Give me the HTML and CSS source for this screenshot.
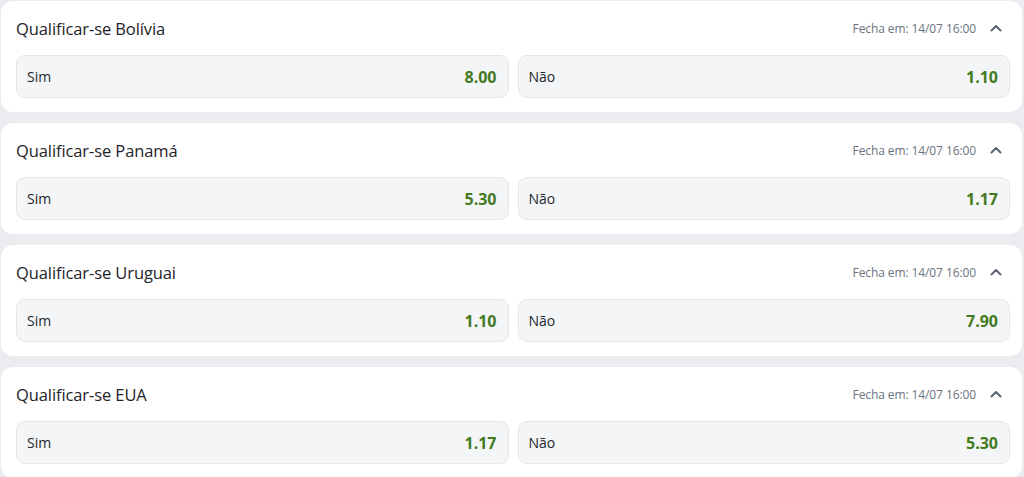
FILE: index.html
```html
<!DOCTYPE html>
<html lang="pt">
<head>
<meta charset="utf-8">
<link rel="stylesheet" href="styles.css">
</head>
<body>
<div class="list">
  <section class="market">
    <header class="market-head">
      <h3 class="market-title">Qualificar-se Bolívia</h3>
      <div class="market-meta"><span class="closes">Fecha em: 14/07 16:00</span>
        <svg class="chev" viewBox="0 0 12 8" width="12" height="8"><path d="M1.5 6.5 6 2l4.5 4.5" fill="none" stroke="currentColor" stroke-width="2" stroke-linecap="round" stroke-linejoin="round"/></svg></div>
    </header>
    <div class="odds">
      <button class="odd"><span class="label">Sim</span><span class="price">8.00</span></button>
      <button class="odd"><span class="label">Não</span><span class="price">1.10</span></button>
    </div>
  </section>
  <section class="market">
    <header class="market-head">
      <h3 class="market-title">Qualificar-se Panamá</h3>
      <div class="market-meta"><span class="closes">Fecha em: 14/07 16:00</span>
        <svg class="chev" viewBox="0 0 12 8" width="12" height="8"><path d="M1.5 6.5 6 2l4.5 4.5" fill="none" stroke="currentColor" stroke-width="2" stroke-linecap="round" stroke-linejoin="round"/></svg></div>
    </header>
    <div class="odds">
      <button class="odd"><span class="label">Sim</span><span class="price">5.30</span></button>
      <button class="odd"><span class="label">Não</span><span class="price">1.17</span></button>
    </div>
  </section>
  <section class="market">
    <header class="market-head">
      <h3 class="market-title">Qualificar-se Uruguai</h3>
      <div class="market-meta"><span class="closes">Fecha em: 14/07 16:00</span>
        <svg class="chev" viewBox="0 0 12 8" width="12" height="8"><path d="M1.5 6.5 6 2l4.5 4.5" fill="none" stroke="currentColor" stroke-width="2" stroke-linecap="round" stroke-linejoin="round"/></svg></div>
    </header>
    <div class="odds">
      <button class="odd"><span class="label">Sim</span><span class="price">1.10</span></button>
      <button class="odd"><span class="label">Não</span><span class="price">7.90</span></button>
    </div>
  </section>
  <section class="market">
    <header class="market-head">
      <h3 class="market-title">Qualificar-se EUA</h3>
      <div class="market-meta"><span class="closes">Fecha em: 14/07 16:00</span>
        <svg class="chev" viewBox="0 0 12 8" width="12" height="8"><path d="M1.5 6.5 6 2l4.5 4.5" fill="none" stroke="currentColor" stroke-width="2" stroke-linecap="round" stroke-linejoin="round"/></svg></div>
    </header>
    <div class="odds">
      <button class="odd"><span class="label">Sim</span><span class="price">1.17</span></button>
      <button class="odd"><span class="label">Não</span><span class="price">5.30</span></button>
    </div>
  </section>
</div>
</body>
</html>
```
FILE: styles.css
```css
html, body {
  margin: 0;
  padding: 0;
  background: #eaecef;
  font-family: "Open Sans", "Noto Sans", sans-serif;
  color: #1f2329;
}
.list {
  display: flex;
  flex-direction: column;
  gap: 11px;
  padding: 1px 2px 0 1px;
}
.market {
  background: #ffffff;
  border-radius: 12px;
  padding: 0 12px 14px 15px;
  height: 111px;
  box-sizing: border-box;
  flex-shrink: 0;
}
.market-head {
  display: flex;
  align-items: center;
  justify-content: space-between;
  height: 54px;
}
.market-title {
  margin: 0;
  font-size: 16.5px;
  font-weight: 400;
  letter-spacing: -0.1px;
  color: #1e2328;
}
.market-meta {
  display: flex;
  align-items: center;
  gap: 14px;
  padding-right: 8px;
}
.closes {
  font-size: 12px;
  color: #6b7480;
  letter-spacing: -0.1px;
}
.chev {
  color: #5b6470;
  display: block;
}
.odds {
  display: grid;
  grid-template-columns: 1fr 1fr;
  gap: 9px;
}
.odd {
  display: flex;
  align-items: center;
  justify-content: space-between;
  height: 43px;
  padding: 0 11px 0 10px;
  background: #f4f5f7;
  border: 1px solid #e3e6ea;
  border-radius: 9px;
  font-family: inherit;
  cursor: pointer;
}
.label {
  font-size: 14px;
  color: #22272d;
}
.price {
  font-size: 16px;
  font-weight: 700;
  color: #437a1f;
}
```
